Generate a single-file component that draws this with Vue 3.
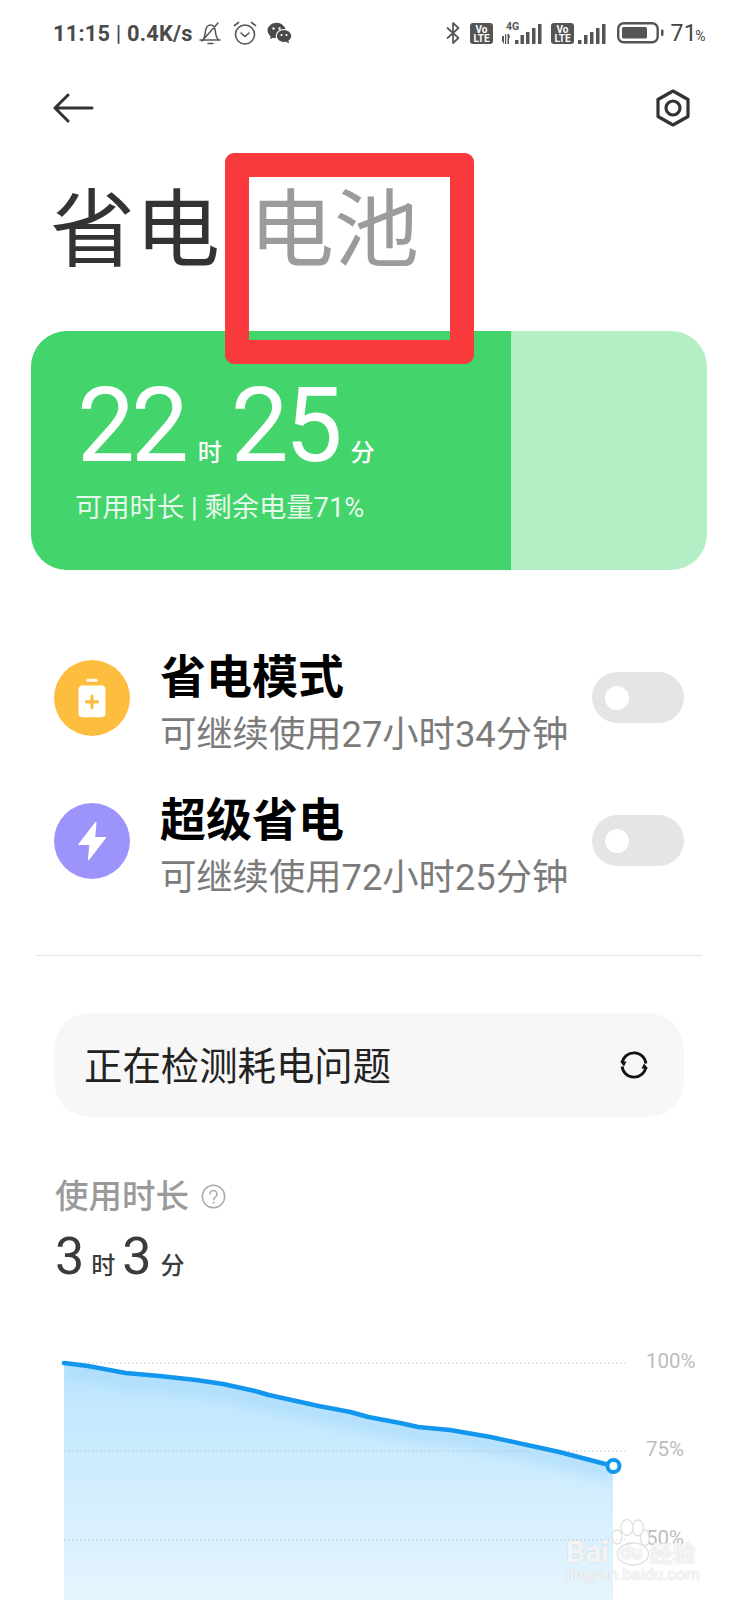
<script setup>
const sx = x => 64 + (x - 66) * 549 / 552
const linePts = [[66,1363],[90,1366],[128,1373],[162,1376],[199,1380],[226,1384],[258,1391],[272,1395],[322,1406],[354,1412],[372,1417],[404,1423],[422,1427],[454,1430],[495,1437],[541,1447],[564,1452],[591,1459],[618,1466]]
  .map(([x, y]) => [Math.round(sx(x) * 10) / 10, y - 1330])
const lineD = 'M' + linePts.map(p => p.join(' ')).join(' L')
const areaD = lineD + ' L613 270 L64 270 Z'
const shadeD = lineD + ' ' + [...linePts].reverse().map(([x, y]) => `L${x} ${y + 14}`).join(' ') + ' Z'
const rows = [
  { title: '省电模式', sub: '可继续使用27小时34分钟', kind: 'save' },
  { title: '超级省电', sub: '可继续使用72小时25分钟', kind: 'super' }
]
const grid = [{ y: 33, t: '100%' }, { y: 121, t: '75%' }, { y: 210, t: '50%' }]
</script>

<template>
  <div class="page">
    <div class="status">
      <div class="status-left">
        <span class="time">11:15 <span class="bar">|</span> 0.4K/s</span>
        <svg class="ic" width="24" height="24" viewBox="0 0 24 24" fill="none" stroke="#555" stroke-width="1.5" stroke-linecap="round" stroke-linejoin="round">
          <path d="M2 19h20M5 19c2-3 2-6 2.500-9C8.200 6 10 4 12.500 4c3 0 4.500 2.500 4.800 6 .3 3 1 6.500 3.200 9M10 22.500h5M4 20 20 2"/>
        </svg>
        <svg class="ic clock" width="26" height="26" viewBox="0 0 26 26" fill="none" stroke="#555" stroke-width="1.6" stroke-linecap="round" stroke-linejoin="round">
          <circle cx="13" cy="14.500" r="9.500"/><path d="M9 13l4 3.500 4-3.500M2.500 5.500 6.500 2.500M23.500 5.500 19.500 2.500"/>
        </svg>
        <svg class="ic wechat" width="25" height="22" viewBox="0 0 25 22">
          <ellipse cx="9.500" cy="8.500" rx="9" ry="7.800" fill="#4a4a4a"/>
          <path d="M4 13l-1 4 5-2z" fill="#4a4a4a"/>
          <ellipse cx="17" cy="14" rx="7.800" ry="6.500" fill="#4a4a4a" stroke="#fff" stroke-width="1.200"/>
          <path d="M21 18.500l1.500 3-4-2z" fill="#4a4a4a"/>
          <circle cx="6.500" cy="6.500" r="1.200" fill="#fff"/><circle cx="12.500" cy="6.500" r="1.200" fill="#fff"/>
          <circle cx="14.500" cy="13" r="1.100" fill="#fff"/><circle cx="19.500" cy="13" r="1.100" fill="#fff"/>
        </svg>
      </div>
      <div class="status-right">
        <svg width="15" height="24" viewBox="0 0 15 24" fill="none" stroke="#555" stroke-width="1.700" stroke-linejoin="round" stroke-linecap="round">
          <path d="M1.500 7l11 10-5.500 5V2l5.500 5-11 10"/>
        </svg>
        <svg class="volte v1" width="23" height="21" viewBox="0 0 23 21">
          <rect width="23" height="21" rx="3" fill="#555"/>
          <text x="11.500" y="9.500" text-anchor="middle" class="vt">Vo</text>
          <text x="11.500" y="18.500" text-anchor="middle" class="vt">LTE</text>
        </svg>
        <svg class="sig1" width="41" height="24" viewBox="0 0 41 24" fill="#555">
          <text x="5" y="9" class="four">4G</text>
          <path d="M1 15h2v8L1 20zM4 23V13h1.200v10zM6.500 13h1.300l1.700 3.500H8V23H6.500z"/>
          <rect x="14" y="19" width="3.500" height="4"/><rect x="19.500" y="14" width="3.500" height="9"/><rect x="25" y="11" width="3.500" height="12"/><rect x="31" y="7" width="3.500" height="16"/><rect x="37" y="3" width="3.500" height="20"/>
        </svg>
        <svg class="volte v2" width="23" height="21" viewBox="0 0 23 21">
          <rect width="23" height="21" rx="3" fill="#555"/>
          <text x="11.500" y="9.500" text-anchor="middle" class="vt">Vo</text>
          <text x="11.500" y="18.500" text-anchor="middle" class="vt">LTE</text>
        </svg>
        <svg class="sig2" width="28" height="20" viewBox="0 0 28 20" fill="#555">
          <rect x="0" y="16" width="3.500" height="4"/><rect x="6" y="11" width="3.500" height="9"/><rect x="12" y="8" width="3.500" height="12"/><rect x="18" y="4" width="3.500" height="16"/><rect x="24" y="0" width="3.500" height="20"/>
        </svg>
        <svg class="batt" width="47" height="22" viewBox="0 0 47 22">
          <rect x="1.200" y="1.200" width="39.500" height="19" rx="5.500" fill="none" stroke="#555" stroke-width="2.400"/>
          <rect x="5" y="5" width="25" height="11.500" rx="1.500" fill="#555"/>
          <rect x="44" y="7.500" width="2.500" height="6.500" rx="1" fill="#555"/>
        </svg>
        <span class="pct">71<small>%</small></span>
      </div>
    </div>

    <div class="nav">
      <svg width="42" height="30" viewBox="0 0 42 30" fill="none" stroke="#333" stroke-width="3" stroke-linecap="round" stroke-linejoin="round">
        <path d="M2 15h37M15 2 2 15l13 13"/>
      </svg>
      <svg width="38" height="40" viewBox="0 0 38 40" fill="none" stroke="#333" stroke-width="3.200" stroke-linejoin="round">
        <path d="M19 3 34 11.500V28.500L19 37 4 28.500V11.500Z"/><circle cx="19" cy="20" r="7"/>
      </svg>
    </div>

    <div class="titles">
      <span class="t-on">省电</span>
      <span class="t-off">电池</span>
    </div>

    <div class="card">
      <div class="card-fill">
        <div class="dur">
          <span class="big">22</span><span class="unit u1">时</span><span class="big">25</span><span class="unit u2">分</span>
        </div>
        <div class="card-sub">可用时长 | 剩余电量71%</div>
      </div>
    </div>

    <div class="rows">
      <div v-for="r in rows" :key="r.kind" class="row">
        <div class="badge" :class="r.kind">
          <svg v-if="r.kind === 'save'" width="30" height="42" viewBox="0 0 30 42">
            <rect x="9" y="1" width="12" height="3" rx="1.500" fill="#fff" opacity=".9"/>
            <rect x="1" y="8" width="28" height="33" rx="4" fill="#fff"/>
            <path d="M15 19v12M9 25h12" stroke="#fdbe3f" stroke-width="3.200" stroke-linecap="round"/>
          </svg>
          <svg v-else width="30" height="40" viewBox="0 0 30 40">
            <path d="M19 1 1.500 23.500H13L11.500 39 29 16.500H17.500Z" fill="#fff" stroke="#fff" stroke-width="1.500" stroke-linejoin="round"/>
          </svg>
        </div>
        <div class="row-text">
          <div class="row-title">{{ r.title }}</div>
          <div class="row-sub">{{ r.sub }}</div>
        </div>
        <div class="toggle"><span class="knob"></span></div>
      </div>
    </div>

    <div class="divider"></div>

    <div class="panel">
      <span class="panel-text">正在检测耗电问题</span>
      <svg width="30" height="30" viewBox="0 0 30 30" fill="none" stroke="#111" stroke-width="2.800">
        <path d="M3.200 12.500A12 12 0 0 1 26.900 13.500M26.800 17.500A12 12 0 0 1 3.100 16.500"/>
        <path d="M1 11.500h6.500l-2.500 5zM29 18.500h-6.500l2.500-5z" fill="#111" stroke="none"/>
      </svg>
    </div>

    <div class="usage">
      <div class="usage-label">使用时长
        <svg class="help" width="25" height="25" viewBox="0 0 25 25" fill="none" stroke="#aaa" stroke-width="1.500">
          <circle cx="12.500" cy="12.500" r="11.200"/>
          <path d="M9 10a3.500 3.500 0 1 1 5.500 2.800c-1.300.9-2 1.500-2 3" stroke-linecap="round"/>
          <circle cx="12.500" cy="18.800" r="1" fill="#aaa" stroke="none"/>
        </svg>
      </div>
      <div class="usage-val">
        <span class="mid">3</span><span class="unit-s">时</span><span class="mid m2">3</span><span class="unit-s us2">分</span>
      </div>
    </div>

    <svg class="chart" width="738" height="270" viewBox="0 0 738 270">
      <defs>
        <linearGradient id="af" x1="0" y1="0" x2="0" y2="1">
          <stop offset="0" stop-color="#bce5fe"/>
          <stop offset="1" stop-color="#e6f5ff"/>
        </linearGradient>
        <filter id="soft" x="-5%" y="-30%" width="110%" height="160%">
          <feGaussianBlur stdDeviation="7"/>
        </filter>
        <clipPath id="ac"><path :d="areaD"/></clipPath>
      </defs>
      <path :d="areaD" fill="url(#af)"/>
      <g clip-path="url(#ac)">
        <path :d="shadeD" fill="#a4d9fb" opacity=".75" filter="url(#soft)"/>
      </g>
      <line v-for="g in grid" :key="g.t" x1="64" x2="625" :y1="g.y" :y2="g.y" stroke="#c4c4c4" stroke-width="1" stroke-dasharray="1.500 2.500"/>
      <text v-for="g in grid" :key="g.t + 'l'" x="646" :y="g.y + 5" class="axis">{{ g.t }}</text>
      <path :d="lineD" fill="none" stroke="#1296ee" stroke-width="4.500" stroke-linecap="round" stroke-linejoin="round"/>
      <circle cx="613.500" cy="136" r="6" fill="#fff" stroke="#1296ee" stroke-width="4"/>
    </svg>

    <div class="redbox"></div>

    <div class="wm">
      <svg class="paw" width="44" height="50" viewBox="0 0 44 50" fill="rgba(255,255,255,.5)" stroke="#e0e0e0" stroke-width="1.300">
        <ellipse cx="7" cy="21" rx="5" ry="7"/><ellipse cx="17" cy="11.500" rx="6" ry="8"/><ellipse cx="28" cy="12" rx="5.500" ry="8"/><ellipse cx="35" cy="22" rx="4.500" ry="8"/>
        <ellipse cx="23" cy="38" rx="15.500" ry="11"/>
      </svg>
      <div class="wm-main"><span class="wm-bai">Bai</span><span class="wm-du">du</span><span class="wm-cn">经验</span></div>
      <div class="wm-url">jingyan.baidu.com</div>
    </div>
  </div>
</template>

<style>
html, body { margin: 0; background: #fff; }
</style>

<style scoped>
.page {
  position: relative;
  width: 738px;
  height: 1600px;
  overflow: hidden;
  background: #fff;
  font-family: Roboto, "Noto Sans CJK SC", sans-serif;
}
.status {
  height: 66px;
  display: flex;
  align-items: center;
  justify-content: space-between;
  padding: 0 32px 0 53px;
  box-sizing: border-box;
  color: #4a4a4a;
}
.status-left, .status-right { display: flex; align-items: center; }
.time { font-size: 21.800px; font-weight: 700; letter-spacing: .2px; white-space: pre; }
.bar { font-weight: 500; }
.ic { margin-left: 5px; }
.clock { margin-left: 10px; }
.wechat { margin-left: 9px; }
.vt { font: 700 10px Roboto, sans-serif; fill: #fff; }
.four { font: 700 10.500px Roboto, sans-serif; }
.v1 { margin-left: 9px; }
.sig1 { margin-left: 8px; }
.v2 { margin-left: 9px; }
.sig2 { margin-left: 4px; margin-top: 1px; }
.batt { margin-left: 11px; }
.pct { font-size: 23px; letter-spacing: .5px; margin-left: 6px; color: #444; }
.pct small { font-size: 14px; margin-left: -2px; }
.nav {
  height: 82px;
  display: flex;
  align-items: center;
  justify-content: space-between;
  padding: 2px 46px 0 53px;
  box-sizing: border-box;
}
.titles {
  height: 183px;
  padding: 26px 0 0 50px;
  box-sizing: border-box;
  display: flex;
  gap: 29px;
  font-size: 85px;
  line-height: 1.15;
  font-family: "Noto Sans CJK SC", sans-serif;
  font-weight: 400;
}
.t-on { color: #333; }
.t-off { color: #9b9b9b; }
.card {
  margin: 0 31px;
  height: 239px;
  border-radius: 36px;
  overflow: hidden;
  background: #b3eec4;
}
.card-fill {
  width: 480px;
  height: 100%;
  background: #43d46b;
  box-sizing: border-box;
  padding: 39px 0 0 44px;
  color: #fff;
}
.dur { display: flex; align-items: baseline; height: 112px; }
.big { font-size: 103px; line-height: 112px; letter-spacing: -4px; font-weight: 400; margin-left: 2px; }
.unit { font-size: 24px; font-weight: 500; font-family: "Noto Sans CJK SC", sans-serif; margin: 0 7px 0 13px; }
.u2 { margin-left: 12px; }
.card-sub {
  margin-top: 8px;
  font-size: 27.300px;
  line-height: 36px;
  color: rgba(255,255,255,.88);
  white-space: nowrap;
}
.rows { margin-top: 56px; padding: 0 54px; }
.row { height: 143px; display: flex; align-items: center; }
.badge {
  width: 76px;
  height: 76px;
  border-radius: 50%;
  display: flex;
  align-items: center;
  justify-content: center;
  flex: none;
}
.badge svg { transform: scale(.96); }
.save { background: #fdbe3f; }
.super { background: #9d94fb; }
.row-text { margin-left: 30px; flex: 1; padding-top: 6px; }
.row-title { font-size: 46px; line-height: 60px; font-weight: 700; color: #000; font-family: "Noto Sans CJK SC", sans-serif; }
.row-sub { margin-top: 8px; font-size: 36.300px; line-height: 48px; color: #7b7b7b; white-space: nowrap; }
.toggle {
  width: 92px;
  height: 51px;
  border-radius: 26px;
  background: #e5e5e5;
  display: flex;
  align-items: center;
  padding-left: 13px;
  box-sizing: border-box;
  flex: none;
}
.knob { width: 24px; height: 24px; border-radius: 50%; background: #fff; }
.divider { margin: 43px 36px 0; height: 1px; background: #e3e3e3; }
.panel {
  margin: 57px 54px 0;
  height: 104px;
  border-radius: 36px;
  background: #f7f7f7;
  display: flex;
  align-items: center;
  justify-content: space-between;
  padding: 0 35px 0 30px;
  box-sizing: border-box;
}
.panel-text { font-size: 38.400px; color: #222; margin-bottom: 4px; font-family: "Noto Sans CJK SC", sans-serif; }
.usage { margin: 54px 0 0 55px; }
.usage-label {
  display: flex;
  align-items: center;
  gap: 12px;
  font-size: 33.500px;
  line-height: 46px;
  font-weight: 500;
  color: #9a9a9a;
  font-family: "Noto Sans CJK SC", sans-serif;
}
.help { margin-top: 4px; }
.usage-val { display: flex; align-items: baseline; color: #3b3b3b; margin-top: 12px; height: 56px; }
.mid { font-size: 52px; line-height: 56px; font-weight: 400; }
.m2 { margin-left: 7px; }
.unit-s { font-size: 24px; font-weight: 500; margin-left: 7px; font-family: "Noto Sans CJK SC", sans-serif; }
.us2 { margin-left: 9px; }
.chart { display: block; position: absolute; left: 0; top: 1330px; }
.axis { font: 400 20.500px Roboto, sans-serif; fill: #bdbdbd; }
.redbox {
  position: absolute;
  left: 225px;
  top: 153px;
  width: 249px;
  height: 211px;
  box-sizing: border-box;
  border: 24px solid #f93a3c;
  border-radius: 9px;
}
.wm {
  position: absolute;
  left: 566px;
  top: 1516px;
  width: 136px;
  color: rgba(255,255,255,.8);
  text-shadow: 0 0 1.500px #c8c8c8;
}
.paw { position: absolute; left: 44px; top: 0; }
.wm-main {
  position: relative;
  margin-top: 22px;
  display: flex;
  align-items: center;
  height: 28px;
  line-height: 28px;
  font-size: 30px;
  font-weight: 700;
  white-space: nowrap;
}
.wm-du { font-size: 20px; margin-left: 11px; }
.wm-cn { font-size: 23px; margin-left: 7px; font-family: "Noto Sans CJK SC", sans-serif; }
.wm-url { font-size: 16.500px; line-height: 18px; white-space: nowrap; }
</style>
